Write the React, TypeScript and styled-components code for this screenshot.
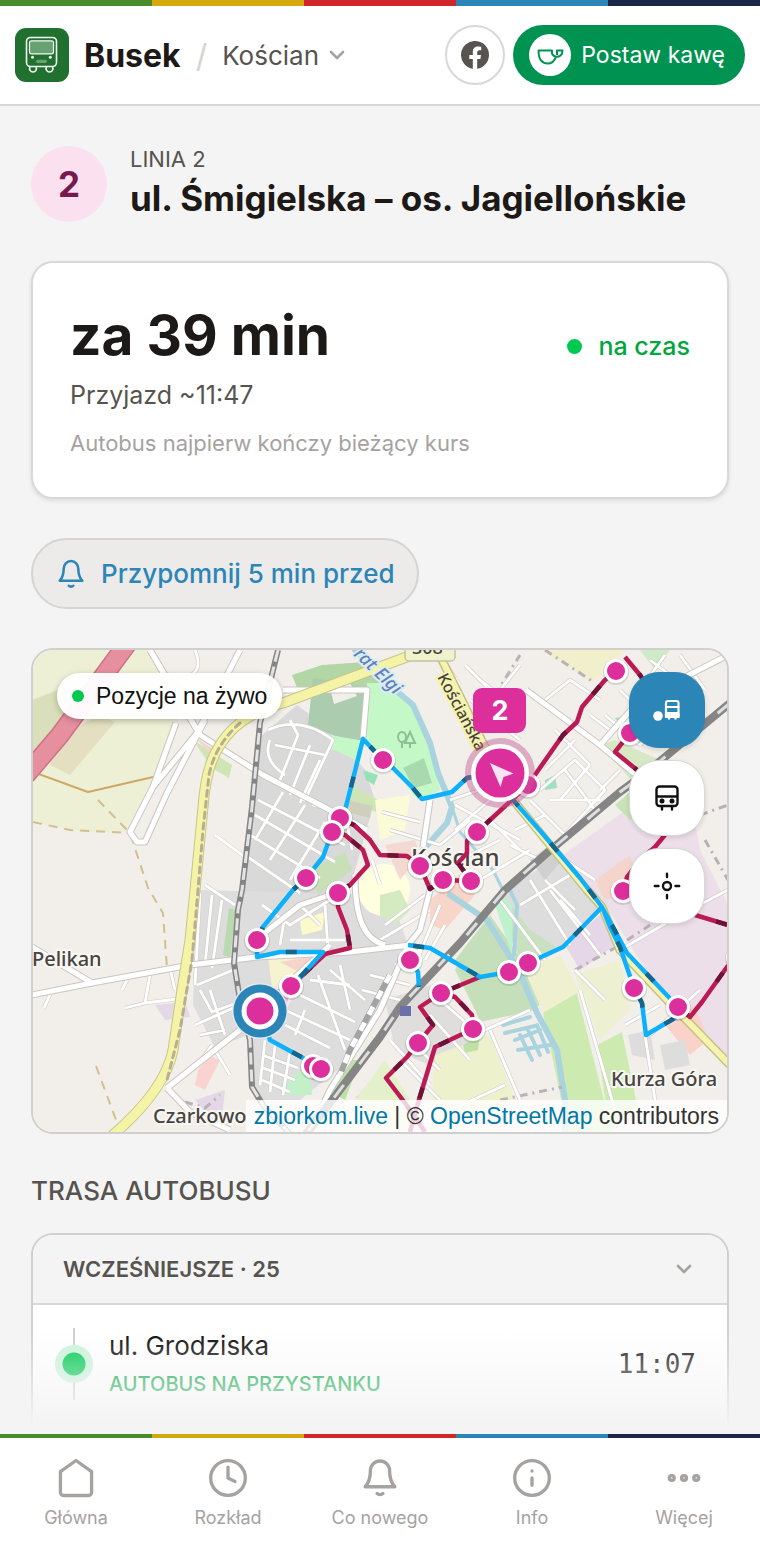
import styled, { createGlobalStyle } from 'styled-components';

const STRIPE = 'linear-gradient(90deg, #478b2b 0 20%, #d4a90b 20% 40%, #d0262a 40% 60%, #2c85b7 60% 80%, #1a2647 80%)';

const stops = [
  [738, 957], [616, 671], [630, 733], [383, 760], [528, 785], [340, 818], [332, 832],
  [477, 832], [420, 866], [443, 880], [471, 881], [306, 878], [338, 893],
  [623, 891], [257, 940], [410, 960], [528, 963], [509, 972], [291, 986],
  [441, 993], [634, 988], [678, 1007], [473, 1029], [418, 1043], [313, 1066], [321, 1069],
];

const blueRoutes = [
  'M500 772L467 778L452 792L422 799L412 787L393 768L383 760L363 739L352 783L343 818L332 832L323 857L315 867L306 878L293 890L263 927L257 940V957L280 952H323L302 975L290 987L260 1010L270 1040L303 1058L318 1069',
  'M500 772L513 800L542 833L580 878L602 907L610 927L620 947L634 988L642 1003L646 1035L678 1016V1007L627 953L602 907L563 947L528 963L509 972L480 977L430 948L408 945',
  'M410 960L418 972L419 987',
];

const redRoutes = [
  'M616 671L605 680L582 707L577 722L563 735L537 772L528 785L477 832L467 841V853L458 863L471 881L443 880L430 889L420 866L407 856L380 855L370 840L354 825L340 818',
  'M625 657L640 675L650 690L630 733L615 752L637 770',
  'M332 832L345 835L363 850L368 865L350 885L338 892V907L347 930L350 948L325 954L290 987',
  'M480 977L441 993L420 1007L433 1025L418 1043L407 1057L386 1078L405 1103L425 1132',
  'M441 993L455 997L472 1015L473 1029L435 1047L428 1070L418 1103L410 1132',
  'M665 835L655 847L640 860L627 877L623 891',
  'M695 915L728 925',
  'M738 957L727 967L702 1002L690 1017L678 1007',
];

const mainStreets = [
  'M150 650L200 735L263 775L345 818L367 830',
  'M150 650L200 735',
  'M32 947L92 983L190 965L257 957L350 952L410 945',
  'M32 995L92 983',
  'M167 1088L240 1030L270 1000L330 945',
  'M240 650L197 733L153 787L130 832L137 842L145 842L167 793L205 720',
  'M176 723L153 787',
  'M283 690L367 690L363 738',
  'M423 847L430 800',
  'M430 890L420 930L408 945L380 1010L330 1090L310 1132',
  'M262 935L300 905L345 890',
  'M355 875C355 920 365 940 385 945',
  'M526 690L600 745L660 795',
  'M600 745L640 700L728 655',
  'M167 1088L190 1112L230 1130',
];

const streets = [
  'M195 650Q203 670 190 675',
  'M268 730Q300 715 333 740L305 800L258 770M275 745L325 755M290 720L298 735L278 785M310 745L290 795M320 760L300 803M270 740Q262 760 285 775',
  'M258 800L345 845M255 815L335 862M250 835L320 878M245 855L300 893M283 792L255 840M305 805L270 860M325 822L290 880M312 805L345 812L352 850',
  'M215 835L245 857M205 885L235 905M200 893L195 985M212 895L205 965M222 900L212 968M200 990L212 1012L245 1000M197 985L233 970M195 1025L240 1005M200 1035L225 1030M210 990L225 1035',
  'M262 905L290 925L330 900M285 915L280 945M325 905L328 950M300 905L320 925M290 940L345 940',
  'M265 1040L260 1085M275 1045L270 1092M290 1050L283 1095M262 1055L298 1068M261 1067L295 1080M262 1080L290 1092',
  'M285 1010L350 1040M300 995L355 1022M318 975L345 1050M340 965L350 1010M310 980L350 985M330 970L365 1000M285 1025L330 1048M305 1010L295 1035',
  'M127 980L122 990M150 975L145 1003M170 968L175 990M52 990L44 1008M75 965L60 950M145 1003L125 1008M145 1003L185 998',
  'M215 1050L230 1075M200 1062L212 1045',
  'M380 885L372 860M390 830L440 845M382 812L420 822M440 845L470 820M430 800L425 850M455 805L520 840',
  'M540 790L575 760L605 790L560 840M550 800L600 800M565 770L595 810M530 800L570 840M575 740L545 770M555 730L590 765M590 765L560 800M515 830L545 815M510 845L540 860',
  'M600 700L570 680L545 700M620 690L650 720M605 715L640 745M650 660L690 690M665 655L640 690M680 655L705 690M640 745L660 725M610 730L590 715M620 770L600 790',
  'M450 800L480 790M455 830L490 800M490 820L520 850M470 700L520 740M480 680L500 695M500 690L520 665M465 665L500 700M440 655L460 685',
  'M460 860L500 840M480 880L530 850M500 900L545 960M530 880L570 945M550 890L600 955M520 905L570 875M560 900L590 935M545 880L575 910M565 860L595 880',
  'M380 940L430 910M385 925L425 895M370 975L410 985M362 990L400 1000M440 1000L480 1035M430 1015L470 1060M420 1050L440 1070M400 1060L440 1100M390 1040L430 1085',
  'M485 1030L530 1010M490 1030L520 1100M440 1115L505 1085M575 970L605 1000M580 990L615 1110M625 1025L660 1005M650 1035L700 990M645 1035L655 1100M620 950L680 915L728 890',
  'M440 905L415 965M445 925L425 960M395 965L420 950',
];

const Bell = ({ size = 42 }: { size?: number }) => (
  <svg width={size} height={size} viewBox="0 0 24 24" fill="none" stroke="currentColor" strokeWidth="1.9" strokeLinecap="round" strokeLinejoin="round">
    <path d="M12 2.3c-3.1 0-5.5 2.5-5.500 5.700 0 4.600-1.200 7.100-3 9h17c-1.800-1.900-3-4.400-3-9 0-3.200-2.400-5.700-5.500-5.700Z" />
    <path d="M10.300 20.800c.8.900 2.600.900 3.400 0" />
  </svg>
);

const NavIcon = ({ children }: { children: React.ReactNode }) => (
  <svg width="42" height="42" viewBox="0 0 24 24" fill="none" stroke="currentColor" strokeWidth="1.9" strokeLinecap="round" strokeLinejoin="round">
    {children}
  </svg>
);

const Chevron = () => (
  <svg width="16" height="10" viewBox="0 0 16 10" fill="none" stroke="#a6a29f" strokeWidth="2.6" strokeLinecap="round" strokeLinejoin="round">
    <path d="M2 2L8 8L14 2" />
  </svg>
);

const navItems = [
  { label: 'Główna', icon: <NavIcon><path d="M12 2L20.900 8.300V20.300a1.700 1.700 0 0 1-1.700 1.700H4.800A1.700 1.700 0 0 1 3.100 20.300V8.300Z" /></NavIcon> },
  { label: 'Rozkład', icon: <NavIcon><circle cx="12" cy="12" r="9.9" /><path d="M12 5.800V12l4 2" /></NavIcon> },
  { label: 'Co nowego', icon: <Bell /> },
  { label: 'Info', icon: <NavIcon><circle cx="12" cy="12" r="9.9" /><path d="M12 12v4.200M12 8v.01" /></NavIcon> },
  { label: 'Więcej', icon: <NavIcon><circle cx="5" cy="12" r="1.4" /><circle cx="12" cy="12" r="1.4" /><circle cx="19" cy="12" r="1.4" /></NavIcon> },
];

const CityMap = () => (
  <MapSvg viewBox="32 650 696 482" preserveAspectRatio="xMidYMid slice" role="img" aria-label="Mapa trasy">
    <rect x="-400" y="300" width="1600" height="1200" fill="#f2efea" />

    <path d="M32 650H148L186 690L177 723L150 785L130 832L85 832L32 822Z" fill="#edf0d5" />
    <path d="M32 700L58 690L70 720L32 765Z" fill="#d9dfba" />
    <path d="M60 735L100 715L115 722L70 775L50 765Z" fill="#e3dfc0" />
    <path d="M193 740L232 765L229 778L212 768Z" fill="#cfe5b5" />
    <path d="M196 738L212 748L215 760Z" fill="#f2d6cd" />
    <path d="M262 735L297 705L335 733L365 770L375 800L345 905L240 895L255 800Z" fill="#dad9d9" />
    <path d="M197 890L390 895L410 950L350 1060L300 1100L255 1100L248 1035L215 1048L193 1005Z" fill="#dedddd" />
    <path d="M292 675L322 665L365 662L383 680L372 700L300 695Z" fill="#b2d6a4" />
    <path d="M313 678L370 688L363 747L308 725Z" fill="#abccaf" />
    <path d="M330 688L350 683L357 696L334 704Z" fill="#f2efea" />
    <path d="M367 683L387 683L413 706L429 743L440 790L418 800L390 765L363 738Z" fill="#c5f8c7" />
    <path d="M330 735L364 741L360 762L330 748Z" fill="#c5f8c7" />
    <path d="M403 768L424 758L432 783L414 788Z" fill="#a9d9ae" />
    <path d="M363 770L378 775L374 785L366 780Z" fill="#96e0ba" />
    <path d="M352 785L378 800L376 812L350 800Z" fill="#cfe5b5" />
    <path d="M348 800L372 806L370 818L345 812Z" fill="#cfcfbd" />
    <path d="M312 868L345 852L352 870L318 895Z" fill="#c8dfb8" />
    <circle cx="384" cy="890" r="26" fill="#ffffe0" />
    <path d="M375 800L410 795L405 830L380 840Z" fill="#fbfbd8" />
    <path d="M385 845L415 840L420 855L400 880Z" fill="#f4d9d2" />
    <path d="M300 920L325 912L322 930L302 935Z" fill="#fafacb" />
    <path d="M268 955L305 950L300 985L272 990Z" fill="#f5f3d0" />
    <path d="M280 962L320 955L305 975Z" fill="#f6d4cb" />
    <path d="M229 908L236 910L230 957L223 955Z" fill="#b9d9ae" />
    <path d="M198 1070L210 1056L220 1060L205 1090L195 1085Z" fill="#fad3d0" />
    <path d="M155 1005L185 1002L190 1017L165 1020Z" fill="#e5d8e6" />
    <path d="M195 1100L225 1090L222 1118L205 1112Z" fill="#e5d8e6" />
    <path d="M290 1078L308 1066L312 1095L282 1095Z" fill="#c2f0c8" />
    <path d="M345 1060L360 1060L345 1100L328 1090Z" fill="#bfe0a6" />
    <path d="M355 1098L380 1075V1100Z" fill="#dccde4" />
    <path d="M355 1100L385 1060L410 1100L405 1132H345Z" fill="#e4f0ca" />
    <path d="M430 900L465 870L475 895L445 930L430 925Z" fill="#f8d5c9" />
    <path d="M380 895L400 890L410 910L395 925L380 915Z" fill="#d4eac0" />
    <path d="M385 1000L430 985L480 1035L440 1070L395 1050Z" fill="#dfdedc" />
    <path d="M493 898L513 885L560 950L525 970L487 945L465 950L455 970L475 1010L520 1015L540 1005L500 915Z" fill="#c9e1c0" />
    <path d="M455 960L490 915L525 965L535 1010L480 1022Z" fill="#c5dfbb" />
    <path d="M495 905L512 893V955Z" fill="#bdf2cc" />
    <path d="M525 970L560 955L580 992L543 1013Z" fill="#eff0cf" />
    <path d="M575 975L620 960L630 1010L600 1040Z" fill="#eef0d2" />
    <path d="M543 1013L577 993L612 1132H568Z" fill="#cdebb0" />
    <path d="M597 1045L622 1032L637 1105L610 1132Z" fill="#cdebb0" />
    <path d="M435 1055L490 1035L515 1100L430 1132Z" fill="#edf1cc" />
    <path d="M463 1045L480 1035L478 1050L465 1053Z" fill="#bfe0a6" />
    <path d="M500 890L565 855L605 905L560 950L530 930Z" fill="#dedddd" />
    <path d="M530 860L550 845L562 860L545 880Z" fill="#d0d0cf" />
    <path d="M563 855L640 800L700 820L728 890V1060L665 1000L605 905Z" fill="#ecdfea" />
    <path d="M565 945L600 915L615 945L580 970Z" fill="#e5d6e8" />
    <path d="M595 880L630 855L640 890L605 900Z" fill="#f5d5cb" />
    <path d="M615 805L650 775L660 800L630 820Z" fill="#c8e3b5" />
    <path d="M600 745L615 740L660 760L640 790Z" fill="#d6e8c4" />
    <path d="M615 718L626 716L624 732Z" fill="#9fe0c2" />
    <path d="M540 650H625L593 682Z" fill="#f2f0cc" />
    <path d="M640 650H670L655 670Z" fill="#cfeac6" />
    <path d="M545 780L555 775L557 788L545 790Z" fill="#9fe0c2" />
    <path d="M628 1035L650 1030L655 1060L632 1055Z" fill="#dedddd" />
    <path d="M665 1025L695 1005L708 1040L690 1055Z" fill="#fad2c9" />
    <path d="M660 1045L685 1040L690 1065L665 1070Z" fill="#dedddd" />
    <path d="M640 860L670 825L690 850L680 880Z" fill="#eee0ea" />
    <path d="M690 790L728 770V905L700 850Z" fill="#f2efea" />

    <g fill="none" stroke="#aad3e0" strokeLinecap="round" strokeLinejoin="round">
      <path d="M355 650L387 683L413 705L430 743L438 773L452 807L447 823L423 850" strokeWidth="6" />
      <path d="M452 807L460 832L493 870L503 890" strokeWidth="3" />
      <path d="M450 895L487 920L520 973L537 1013L557 1050L565 1100V1132" strokeWidth="6" />
      <path d="M510 890L517 905L514 955" strokeWidth="4" />
      <path d="M503 1025L530 1017M505 1033L535 1026M515 1040L540 1030M520 1035L532 1060M528 1030L540 1055M537 1025L548 1052M518 1050L550 1045" strokeWidth="4" />
    </g>

    <g fill="none" strokeLinejoin="round">
      <path d="M33 772L88 792L153 777" stroke="#cda967" strokeWidth="2" />
      <path d="M33 822L70 830L130 833M98 800L130 833L148 888L163 913L167 968M96 1066L116 1120" stroke="#d0bf90" strokeWidth="2" strokeDasharray="9 7" />
      <path d="M545 650L595 683M495 695L520 655M575 970L620 945L650 925M500 1100L562 1087M700 815L728 805M705 840L728 880M185 1102L205 1108L220 1095" stroke="#b9b0b8" strokeWidth="3" strokeDasharray="8 5 2 5" />
      {streets.map((d) => <path key={d} d={d} stroke="#cfccc8" strokeWidth="4" />)}
      {streets.map((d) => <path key={d} d={d} stroke="#fff" strokeWidth="2.8" />)}
      {mainStreets.map((d) => <path key={d} d={d} stroke="#c9c6c2" strokeWidth="7" />)}
      {mainStreets.map((d) => <path key={d} d={d} stroke="#fff" strokeWidth="5" />)}

      <path d="M130 640L60 735L26 775" stroke="#cf7186" strokeWidth="20" />
      <path d="M130 640L60 735L26 775" stroke="#e58f9f" strokeWidth="17" />

      <path d="M278 650L260 723L252 807L242 890L238 910L234 963L240 1000L250 1040L252 1087L263 1105L290 1134" stroke="#858585" strokeWidth="6" />
      <path d="M278 650L260 723L252 807L242 890L238 910L234 963L240 1000L250 1040L252 1087L263 1105L290 1134" stroke="#e4e4e4" strokeWidth="3" strokeDasharray="12 5" />
      <path d="M730 703L647 772L620 792L547 853L505 890L460 943L400 1007L380 1037L330 1103L306 1134" stroke="#858585" strokeWidth="8" />
      <path d="M730 703L647 772L620 792L547 853L505 890L460 943L400 1007L380 1037L330 1103L306 1134" stroke="#dedede" strokeWidth="3" strokeDasharray="16 26" />
      <path d="M390 975L350 1050L340 1075" stroke="#a3a3a3" strokeWidth="6" />
      <path d="M390 975L350 1050L340 1075" stroke="#fff" strokeWidth="5" strokeDasharray="9 9" />

      <g strokeLinecap="round">
        <path d="M437 650L483 743L513 800L587 890L602 907L620 950L667 1000L732 1067" stroke="#c4c183" strokeWidth="9" />
        <path d="M437 650L483 743L513 800L587 890L602 907L620 950L667 1000L732 1067" stroke="#f6f3ae" strokeWidth="6" />
        <path d="M420 652L377 668L283 703Q238 715 220 745Q206 765 203 807L195 890L190 940L182 990L173 1050Q165 1090 113 1135" stroke="#c6c58c" strokeWidth="11" />
        <path d="M420 652L377 668L283 703Q238 715 220 745Q206 765 203 807L195 890L190 940L182 990L173 1050Q165 1090 113 1135" stroke="#f4f3a6" strokeWidth="9" />
        <path d="M240 723Q215 745 209 775L203 830L198 890L192 960L180 1030L167 1080" stroke="#b8ae93" strokeWidth="3" strokeDasharray="6 5" />
      </g>
    </g>

    <rect x="405" y="632" width="50" height="29" rx="4" fill="#eff3cd" stroke="#c4c59c" strokeWidth="1.5" />
    <rect x="400" y="1006" width="11" height="10" fill="#6b6fae" />
    <g fill="none" stroke="#8fbf96" strokeWidth="2">
      <ellipse cx="402" cy="737" rx="4" ry="5" />
      <path d="M402 742V748M410 732L405 743H415ZM410 743V748" />
    </g>

    <g fontFamily="'Noto Sans', sans-serif" fontWeight="500" fill="#46443f" stroke="#f8f6f2" strokeWidth="4" strokeLinejoin="round" paintOrder="stroke">
      <text x="412" y="654" fontSize="18" stroke="none">308</text>
      <text x="32" y="966" fontSize="20">Pelikan</text>
      <text x="611" y="1086" fontSize="20">Kurza Góra</text>
      <text x="153" y="1123" fontSize="20">Czarkowo</text>
      <text x="411" y="866" fontSize="24">Kościan</text>
      <text fontSize="16" transform="translate(437 677) rotate(62)" stroke="#f6f3ae">Kościańska</text>
      <text fontSize="18" transform="translate(353 655) rotate(44)" fill="#5f82bd" stroke="#dcecf0" fontStyle="italic">rat Elgi</text>
    </g>

    <g fill="none" strokeLinejoin="round" strokeWidth="4.5">
      {redRoutes.map((d) => <path key={d} d={d} stroke="#bb1a54" />)}
      {redRoutes.map((d) => <path key={d} d={d} stroke="#6e1238" strokeDasharray="11 47" strokeDashoffset="-22" />)}
      {blueRoutes.map((d) => <path key={d} d={d} stroke="#0fb0fb" />)}
      {blueRoutes.map((d) => <path key={d} d={d} stroke="#16658b" strokeDasharray="11 49" strokeDashoffset="-28" />)}
    </g>

    <circle cx="280" cy="997" r="10" fill="#f0a8d8" stroke="#fbe3f3" strokeWidth="3" />
    {stops.map(([x, y]) => (
      <g key={`${x}-${y}`}>
        <circle cx={x} cy={y + 1} r="13" fill="#000" opacity="0.12" />
        <circle cx={x} cy={y} r="10.5" fill="#dd2f9c" stroke="#fff" strokeWidth="3" />
      </g>
    ))}

    <circle cx="260" cy="1011" r="28" fill="#dfe9ee" />
    <circle cx="260" cy="1011" r="26.5" fill="#2c85b7" />
    <circle cx="260" cy="1011" r="18.5" fill="#fff" />
    <circle cx="260" cy="1011" r="13.500" fill="#dd2f9c" />

    <circle cx="500" cy="773" r="35" fill="#c05a95" opacity="0.45" />
    <circle cx="500" cy="773" r="29" fill="#fff" />
    <circle cx="500" cy="773" r="24.5" fill="#dd2f9c" />
    <path d="M490 763L513.5 773.5L503.5 777L500.5 787Z" fill="#fbe3f2" />
    <rect x="473" y="688" width="53" height="45" rx="9" fill="#dd2f9c" />
    <text x="500" y="720" textAnchor="middle" fontSize="27" fontWeight="700" fill="#fff" fontFamily="'Inter', sans-serif">2</text>
  </MapSvg>
);

const App = () => (
  <>
    <GlobalStyle />
    <Shell>
      <Header>
        <Brand href="#">
          <svg width="54" height="54" viewBox="0 0 54 54" fill="none">
            <rect width="54" height="54" rx="11" fill="#20702f" />
            <rect x="11.5" y="9.5" width="30" height="29" rx="4" stroke="#f3faf3" strokeWidth="1.6" />
            <rect x="14.5" y="12.8" width="24" height="13" rx="2" fill="#68a172" stroke="#f3faf3" strokeWidth="1.2" />
            <circle cx="17.5" cy="29.3" r="1.5" fill="#f3faf3" />
            <circle cx="35.3" cy="29.3" r="1.5" fill="#f3faf3" />
            <rect x="21" y="31.7" width="11" height="3.2" rx="1.6" fill="#68a172" />
            <path d="M15 39a3.400 3.400 0 1 0 6 0M31.500 39a3.400 3.400 0 1 0 6 0" stroke="#f3faf3" strokeWidth="1.6" />
          </svg>
          Busek
        </Brand>
        <Slash>/</Slash>
        <CityButton>
          Kościan
          <Chevron />
        </CityButton>
        <FacebookLink href="#" aria-label="Facebook">
          <svg width="28" height="28" viewBox="0 0 28 28">
            <path d="M28 14A14 14 0 1 0 11.800 27.800V18H8.300V14H11.800V10.900C11.800 7.400 13.900 5.500 17.100 5.500 18.600 5.500 20.200 5.800 20.200 5.800V9.200H18.400C16.700 9.200 16.200 10.300 16.200 11.400V14H20L19.400 18H16.200V27.800A14 14 0 0 0 28 14Z" fill="#57534e" />
          </svg>
        </FacebookLink>
        <CoffeeLink href="#">
          <svg width="42" height="42" viewBox="0 0 42 42" fill="none" stroke="#009250" strokeWidth="2" strokeLinejoin="round">
            <circle cx="21" cy="21" r="21" fill="#fff" stroke="none" />
            <path d="M9.600 16.400H23C22.500 19.500 23.500 22 27 22.800C25.500 27 22.500 29.500 18.500 29.500C13 29.500 9.200 25 9.600 16.400Z" />
            <path d="M27 22.800C31 23 33.600 20.500 33.500 16.400H28V21" />
          </svg>
          Postaw kawę
        </CoffeeLink>
      </Header>

      <Main>
        <LineHeading>
          <LineBadge>2</LineBadge>
          <div>
            <LineLabel>LINIA 2</LineLabel>
            <LineTitle>ul. Śmigielska – os. Jagiellońskie</LineTitle>
          </div>
        </LineHeading>

        <ArrivalCard>
          <ArrivalTop>
            <Countdown>za 39 min</Countdown>
            <Punctuality>na czas</Punctuality>
          </ArrivalTop>
          <ArrivalTime>Przyjazd ~11:47</ArrivalTime>
          <ArrivalNote>Autobus najpierw kończy bieżący kurs</ArrivalNote>
        </ArrivalCard>

        <RemindButton>
          <Bell size={32} />
          Przypomnij 5 min przed
        </RemindButton>

        <MapPanel>
          <CityMap />
          <LivePill>Pozycje na żywo</LivePill>
          <MapControls>
            <MapButton $active aria-label="Pokaż autobus i przystanek">
              <svg width="28" height="24" viewBox="0 0 28 24" fill="none" stroke="#fff" strokeWidth="2.2">
                <circle cx="5" cy="18" r="4.8" fill="#fff" stroke="none" />
                <rect x="13" y="3" width="12.5" height="16" rx="2" />
                <path d="M13 9H25M13 15H25" />
                <path d="M13 16.500H25.500V19H13ZM16 19V21.500M22.500 19V21.500" fill="#fff" />
              </svg>
            </MapButton>
            <MapButton aria-label="Pokaż autobus">
              <svg width="26" height="28" viewBox="0 0 26 28" fill="none" stroke="#111" strokeWidth="2.4" strokeLinecap="round" strokeLinejoin="round">
                <rect x="2.5" y="2.5" width="21" height="19.5" rx="3" />
                <path d="M3 12.500H23M8 22.500V25.500M18 22.500V25.500" />
                <circle cx="8" cy="17" r="1.3" fill="#111" />
                <circle cx="18" cy="17" r="1.3" fill="#111" />
              </svg>
            </MapButton>
            <MapButton aria-label="Moja lokalizacja">
              <svg width="28" height="28" viewBox="0 0 28 28" fill="none" stroke="#111" strokeWidth="2.4" strokeLinecap="round">
                <circle cx="14" cy="14" r="4" />
                <path d="M14 1.800V5M14 23V26.200M1.800 14H5.500M22.500 14H26.200" />
              </svg>
            </MapButton>
          </MapControls>
          <Attribution>
            <a href="#">zbiorkom.live</a> | © <a href="#">OpenStreetMap</a> contributors
          </Attribution>
        </MapPanel>

        <SectionTitle>TRASA AUTOBUSU</SectionTitle>
        <RouteCard>
          <EarlierButton>
            WCZEŚNIEJSZE · 25
            <Chevron />
          </EarlierButton>
          <StopRow>
            <Track />
            <StopText>
              <StopName>ul. Grodziska</StopName>
              <StopState>AUTOBUS NA PRZYSTANKU</StopState>
            </StopText>
            <StopTime>11:07</StopTime>
          </StopRow>
        </RouteCard>
      </Main>

      <BottomNav>
        {navItems.map(({ label, icon }) => (
          <NavLink key={label} href="#">
            {icon}
            {label}
          </NavLink>
        ))}
      </BottomNav>
    </Shell>
  </>
);

const GlobalStyle = createGlobalStyle`
  * {
    box-sizing: border-box;
  }

  body {
    margin: 0;
    background: #f4f4f4;
    color: #1c1917;
    font-family: 'Inter', 'Liberation Sans', sans-serif;
  }

  a {
    color: inherit;
    text-decoration: none;
  }

  button {
    font: inherit;
    color: inherit;
    cursor: pointer;
  }

  h1, h2, p {
    margin: 0;
  }
`;

const Shell = styled.div`
  display: flex;
  flex-direction: column;
  min-height: 100vh;
`;

const Header = styled.header`
  display: flex;
  align-items: center;
  padding: 25px 15px 19px;
  background: ${STRIPE} top / 100% 6px no-repeat, #fff;
  border-bottom: 2px solid #d9d8d7;
`;

const Brand = styled.a`
  display: flex;
  align-items: center;
  gap: 15px;
  font-size: 32px;
  font-weight: 700;
`;

const Slash = styled.span`
  margin: 0 15px;
  font-size: 32px;
  color: #d6d3d1;
`;

const CityButton = styled.button`
  display: flex;
  align-items: center;
  gap: 10px;
  padding: 0;
  margin-right: auto;
  font-size: 26px;
  color: #57534e;
  background: none;
  border: 0;
`;

const FacebookLink = styled.a`
  display: grid;
  place-items: center;
  width: 60px;
  height: 60px;
  margin-right: 8px;
  border: 2px solid #d9d8d7;
  border-radius: 50%;
`;

const CoffeeLink = styled.a`
  display: flex;
  align-items: center;
  gap: 10px;
  height: 60px;
  padding: 0 20px 0 16px;
  font-size: 23px;
  color: #fff;
  background: #009250;
  border-radius: 30px;
`;

const Main = styled.main`
  display: flex;
  flex: 1;
  flex-direction: column;
  padding: 39px 31px 0;
`;

const LineHeading = styled.div`
  display: flex;
  align-items: center;
  gap: 23px;
  margin-bottom: 38px;
`;

const LineBadge = styled.div`
  display: grid;
  flex: none;
  place-items: center;
  width: 76px;
  height: 76px;
  font-size: 35px;
  font-weight: 700;
  color: #77194f;
  background: #fbe0f0;
  border-radius: 50%;
`;

const LineLabel = styled.p`
  font-size: 22px;
  line-height: 28px;
  color: #57534e;
`;

const LineTitle = styled.h1`
  font-size: 35px;
  font-weight: 700;
  line-height: 50px;
`;

const ArrivalCard = styled.section`
  padding: 36px 37px 30px;
  margin-bottom: 39px;
  background: #fff;
  border: 2px solid #d9d8d7;
  border-radius: 22px;
  box-shadow: 0 2px 4px rgba(0, 0, 0, 0.1);
`;

const ArrivalTop = styled.div`
  display: flex;
  align-items: center;
  justify-content: space-between;
`;

const Countdown = styled.p`
  font-size: 55px;
  font-weight: 700;
  line-height: 72px;
`;

const Punctuality = styled.p`
  display: flex;
  align-items: center;
  gap: 16px;
  padding-top: 22px;
  font-size: 25px;
  font-weight: 500;
  color: #00a63e;

  &::before {
    content: '';
    width: 15px;
    height: 15px;
    background: #00c951;
    border-radius: 50%;
  }
`;

const ArrivalTime = styled.p`
  font-size: 25px;
  line-height: 48px;
  color: #57534e;
`;

const ArrivalNote = styled.p`
  font-size: 22px;
  line-height: 48px;
  color: #a6a29f;
`;

const RemindButton = styled.button`
  display: flex;
  align-items: center;
  align-self: flex-start;
  gap: 14px;
  height: 71px;
  padding: 0 22px;
  margin-bottom: 39px;
  font-size: 26px;
  font-weight: 500;
  color: #2c85b7;
  background: #edebea;
  border: 2px solid #d6d3d1;
  border-radius: 36px;
`;

const MapPanel = styled.section`
  position: relative;
  height: 486px;
  margin-bottom: 40px;
  overflow: hidden;
  border: 2px solid #d0cfcd;
  border-radius: 22px;
`;

const MapSvg = styled.svg`
  display: block;
  width: 100%;
  height: 100%;
`;

const LivePill = styled.div`
  position: absolute;
  top: 23px;
  left: 24px;
  display: flex;
  align-items: center;
  gap: 12px;
  height: 46px;
  padding: 0 15px;
  font: 23px 'Liberation Sans', sans-serif;
  color: #111;
  background: rgba(255, 255, 255, 0.95);
  border-radius: 23px;
  box-shadow: 0 2px 6px rgba(0, 0, 0, 0.25);

  &::before {
    content: '';
    width: 12px;
    height: 12px;
    background: #00c951;
    border-radius: 50%;
  }
`;

const MapControls = styled.div`
  position: absolute;
  top: 22px;
  right: 22px;
  display: flex;
  flex-direction: column;
  gap: 12px;
`;

const MapButton = styled.button<{ $active?: boolean }>`
  display: grid;
  place-items: center;
  width: 76px;
  height: 76px;
  padding: 0;
  background: ${(props) => (props.$active ? '#2c85b7' : '#fff')};
  border: 1px solid ${(props) => (props.$active ? '#2c85b7' : '#d9d8d7')};
  border-radius: 30px;
  box-shadow: 0 2px 5px rgba(0, 0, 0, 0.12);
`;

const Attribution = styled.div`
  position: absolute;
  right: 0;
  bottom: 0;
  padding: 0 8px;
  font: 23px/32px 'Liberation Sans', sans-serif;
  color: #333;
  background: rgba(255, 255, 255, 0.8);

  a {
    color: #0078a8;
  }
`;

const SectionTitle = styled.h2`
  margin-bottom: 25px;
  font-size: 26px;
  font-weight: 500;
  line-height: 34px;
  color: #57534e;
`;

const RouteCard = styled.section`
  flex: 1;
  overflow: hidden;
  background: #fff;
  border: 2px solid #d0cfcd;
  border-bottom: 0;
  border-radius: 22px 22px 0 0;
`;

const EarlierButton = styled.button`
  display: flex;
  align-items: center;
  justify-content: space-between;
  width: 100%;
  height: 70px;
  padding: 0 35px 0 30px;
  font-size: 22px;
  font-weight: 600;
  color: #57534e;
  background: #f4f4f4;
  border: 0;
  border-bottom: 2px solid #d9d8d7;
`;

const StopRow = styled.div`
  display: flex;
  align-items: center;
  gap: 16px;
  padding: 21px 31px 24px 22px;
`;

const Track = styled.div`
  display: grid;
  place-items: center;
  width: 38px;
  height: 72px;
  background: linear-gradient(#cfcecd, #cfcecd) center / 2px 100% no-repeat;

  &::before {
    content: '';
    width: 38px;
    height: 38px;
    background: radial-gradient(#00c951 0 11px, #c9f3da 12px);
    border-radius: 50%;
  }
`;

const StopText = styled.div`
  flex: 1;
`;

const StopName = styled.p`
  font-size: 26px;
  line-height: 40px;
  color: #0c0a09;
`;

const StopState = styled.p`
  font-size: 20px;
  font-weight: 500;
  line-height: 36px;
  color: #00a63e;
`;

const StopTime = styled.time`
  font-family: 'DejaVu Sans Mono', monospace;
  font-size: 26px;
`;

const BottomNav = styled.nav`
  position: sticky;
  bottom: 0;
  display: grid;
  grid-template-columns: repeat(5, 1fr);
  height: 121px;
  padding-top: 23px;
  background: ${STRIPE} top / 100% 4px no-repeat, #fff;
  border-top: 1px solid #d9d8d7;

  &::before {
    content: '';
    position: absolute;
    right: 0;
    bottom: 100%;
    left: 0;
    height: 110px;
    background: linear-gradient(rgba(244, 244, 244, 0) 5%, rgba(244, 244, 244, 0.55) 58%, #f4f4f4 92%);
    pointer-events: none;
  }
`;

const NavLink = styled.a`
  display: flex;
  flex-direction: column;
  align-items: center;
  gap: 7px;
  font-size: 18px;
  line-height: 24px;
  color: #a6a29f;
`;

export default App;
